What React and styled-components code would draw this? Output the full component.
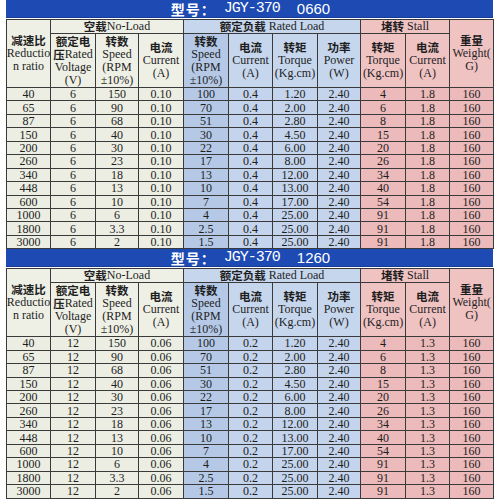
import React from "react";
import styled, { createGlobalStyle } from "styled-components";

const GlobalStyle = createGlobalStyle`
  body {
    margin: 0;
    background: #ffffff;
    font-family: "Liberation Serif", "Noto Sans CJK SC", serif;
  }
`;

const base = [
  ["40", "150", "100", "1.20", "4"],
  ["65", "90", "70", "2.00", "6"],
  ["87", "68", "51", "2.80", "8"],
  ["150", "40", "30", "4.50", "15"],
  ["200", "30", "22", "6.00", "20"],
  ["260", "23", "17", "8.00", "26"],
  ["340", "18", "13", "12.00", "34"],
  ["448", "13", "10", "13.00", "40"],
  ["600", "10", "7", "17.00", "54"],
  ["1000", "6", "4", "25.00", "91"],
  ["1800", "3.3", "2.5", "25.00", "91"],
  ["3000", "2", "1.5", "25.00", "91"],
];

const models = [
  { code: "0660", volt: "6", cur: "0.10", loadCur: "0.4", stallCur: "1.8" },
  { code: "1260", volt: "12", cur: "0.06", loadCur: "0.2", stallCur: "1.3" },
];

const widths = [44, 45, 43, 45, 45, 44, 45, 43, 45, 44, 44];

const colors = {
  idle: "#eceee3",
  idleHead: "#eef0e6",
  speed: "#b5c9e7",
  load: "#c3d4ec",
  loadHead: "#c6d6ed",
  stall: "#ecbaba",
  stallHead: "#f0c3c3",
};

// label cells of the second header row: [cjk, ...latin lines], background
const labels = [
  [["额定电", "压|Rated", "Voltage", "(V)"], colors.idleHead],
  [["转数", "Speed", "(RPM", "±10%)"], colors.idleHead],
  [["电流", "Current", "(A)"], colors.idleHead],
  [["转数", "Speed", "(RPM", "±10%)"], colors.speed],
  [["电流", "Current", "(A)"], colors.loadHead],
  [["转矩", "Torque", "(Kg.cm)"], colors.loadHead],
  [["功率", "Power", "(W)"], colors.loadHead],
  [["转矩", "Torque", "(Kg.cm)"], colors.stallHead],
  [["电流", "Current", "(A)"], colors.stallHead],
];

function LabelText({ lines }) {
  return lines.map((text, i) => {
    if (i === 0) {
      return (
        <Line key={i}>
          <Cjk>{text}</Cjk>
        </Line>
      );
    }
    const [cjk, latin] = text.includes("|") ? text.split("|") : [null, text];
    return (
      <Line key={i}>
        {cjk && <Cjk>{cjk}</Cjk>}
        {latin}
      </Line>
    );
  });
}

export default function App() {
  return (
    <>
      <GlobalStyle />
      <Page>
        {models.map((m) => (
          <Block key={m.code}>
            <TitleBar>
              <TitleCjk>型号：</TitleCjk>
              <Mono>JGY-370</Mono>
              <Code>{m.code}</Code>
            </TitleBar>
            <Table>
              <colgroup>
                {widths.map((w, i) => (
                  <col key={i} style={{ width: w }} />
                ))}
              </colgroup>
              <thead>
                <SectionRow>
                  <Head rowSpan={2} $bg={colors.idleHead}>
                    <LabelText lines={["减速比", "Reductio", "n ratio"]} />
                  </Head>
                  <Head colSpan={3} $bg={colors.idleHead}>
                    <Line>
                      <Cjk>空载</Cjk>No-Load
                    </Line>
                  </Head>
                  <Head colSpan={4} $bg={colors.loadHead}>
                    <Line>
                      <Cjk>额定负载</Cjk> Rated Load
                    </Line>
                  </Head>
                  <Head colSpan={2} $bg={colors.stallHead}>
                    <Line>
                      <Cjk>堵转</Cjk> Stall
                    </Line>
                  </Head>
                  <Head rowSpan={2} $bg={colors.stallHead}>
                    <LabelText lines={["重量", "Weight(", "G)"]} />
                  </Head>
                </SectionRow>
                <LabelRow>
                  {labels.map(([lines, bg], i) => (
                    <Head key={i} $bg={bg}>
                      <LabelText lines={lines} />
                    </Head>
                  ))}
                </LabelRow>
              </thead>
              <tbody>
                {base.map(([ratio, speed, loadSpeed, torque, stallTorque]) => (
                  <DataRow key={ratio}>
                    <Cell $bg={colors.idle}>{ratio}</Cell>
                    <Cell $bg={colors.idle}>{m.volt}</Cell>
                    <Cell $bg={colors.idle}>{speed}</Cell>
                    <Cell $bg={colors.idle}>{m.cur}</Cell>
                    <Cell $bg={colors.speed}>{loadSpeed}</Cell>
                    <Cell $bg={colors.load}>{m.loadCur}</Cell>
                    <Cell $bg={colors.load}>{torque}</Cell>
                    <Cell $bg={colors.load}>2.40</Cell>
                    <Cell $bg={colors.stall}>{stallTorque}</Cell>
                    <Cell $bg={colors.stall}>{m.stallCur}</Cell>
                    <Cell $bg={colors.stall}>160</Cell>
                  </DataRow>
                ))}
              </tbody>
            </Table>
          </Block>
        ))}
      </Page>
    </>
  );
}

// =========================== STYLES ============================= //

const Page = styled.div`
  padding-left: 6px;
  width: 487px;
  display: flex;
  flex-direction: column;
`;

const Block = styled.section`
  display: flex;
  flex-direction: column;
  gap: 1px;
`;

const TitleBar = styled.div`
  height: 18px;
  background: #1d4ab3;
  border-bottom: 1px solid #163c96;
  box-sizing: border-box;
  color: #ffffff;
  display: flex;
  align-items: center;
  justify-content: center;
  padding-left: 2px;
`;

const TitleCjk = styled.span`
  font-family: "Noto Sans CJK SC", sans-serif;
  font-weight: 700;
  font-size: 14px;
  line-height: 16px;
  letter-spacing: 1px;
`;

const Mono = styled.span`
  font-family: "Liberation Mono", monospace;
  font-size: 15px;
  line-height: 16px;
  letter-spacing: -1px;
  margin-left: 8px;
`;

const Code = styled.span`
  font-family: "Liberation Sans", sans-serif;
  font-size: 15px;
  line-height: 16px;
  margin-left: 17px;
`;

const Line = styled.div`
  height: 13px;
  line-height: 13px;
  display: flex;
  align-items: center;
  justify-content: center;
  white-space: pre;
`;

const Cjk = styled.span`
  font-family: "Noto Sans CJK SC", sans-serif;
  font-weight: 600;
  font-size: 11.5px;
  line-height: 13px;
`;

const Table = styled.table`
  width: 487px;
  table-layout: fixed;
  border-collapse: collapse;
  border: 1px solid #2c2c2c;
  font-family: "Liberation Serif", "Noto Sans CJK SC", serif;
  color: #1e1e1e;
`;

const SectionRow = styled.tr`
  height: 13px;
`;

const LabelRow = styled.tr`
  height: 54px;
`;

const DataRow = styled.tr`
  height: 13.45px;
`;

const Head = styled.th`
  background: ${(p) => p.$bg};
  border: 1px solid #3a3a3a;
  padding: 0;
  font-size: 12px;
  font-weight: 400;
  text-align: center;
  vertical-align: middle;
  overflow: hidden;
`;

const Cell = styled.td`
  background: ${(p) => p.$bg};
  border: 1px solid #3a3a3a;
  padding: 0;
  font-size: 12px;
  line-height: 12px;
  text-align: center;
  white-space: nowrap;
`;
